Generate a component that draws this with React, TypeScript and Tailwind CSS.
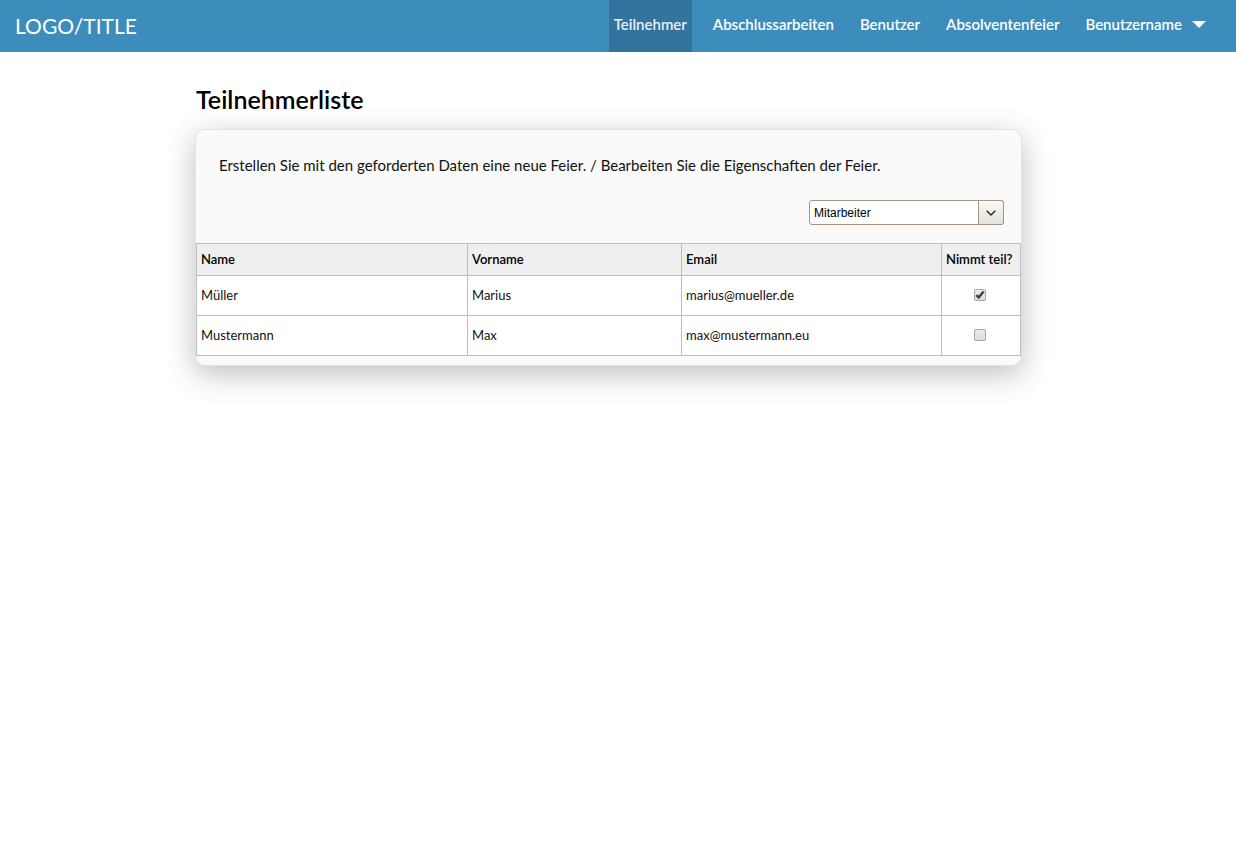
import { useState } from 'react';

type Participant = {
  name: string;
  firstName: string;
  email: string;
  attending: boolean;
};

const initialParticipants: Participant[] = [
  { name: 'Müller', firstName: 'Marius', email: 'marius@mueller.de', attending: true },
  { name: 'Mustermann', firstName: 'Max', email: 'max@mustermann.eu', attending: false },
];

const navItems = [
  { label: 'Teilnehmer', active: true },
  { label: 'Abschlussarbeiten', active: false },
  { label: 'Benutzer', active: false },
  { label: 'Absolventenfeier', active: false },
];

function Header() {
  return (
    <header className="flex h-13 items-stretch justify-between bg-[#3d8dbc] pr-[30px] pl-[15px] text-white">
      <a href="#" className="flex items-center text-[21px] leading-7">
        LOGO/TITLE
      </a>
      <nav className="flex gap-4 text-[15px] leading-5 font-semibold">
        {navItems.map((item) => (
          <a
            key={item.label}
            href="#"
            aria-current={item.active ? 'page' : undefined}
            className={
              item.active
                ? 'flex items-center bg-[#33749e] px-[5px] pb-1 text-[#e6eff5]'
                : 'flex items-center px-[5px] pb-1'
            }
          >
            {item.label}
          </a>
        ))}
        <button type="button" className="flex items-center gap-2.5 pb-1 pl-[5px]">
          Benutzername
          <svg viewBox="0 0 14 7" className="h-[7px] w-3.5" fill="currentColor" aria-hidden="true">
            <path d="M0 0h14L7 7z" />
          </svg>
        </button>
      </nav>
    </header>
  );
}

function RoleSelect() {
  return (
    <div className="relative w-[195px]">
      <select
        aria-label="Rolle"
        defaultValue="Mitarbeiter"
        className="block h-[25px] w-full appearance-none rounded-[3px] border border-[#a59684] bg-white pr-7 pl-1 font-['Liberation_Sans',sans-serif] text-[12px] text-black"
      >
        <option>Mitarbeiter</option>
        <option>Student</option>
      </select>
      <span className="pointer-events-none absolute inset-y-0 right-0 flex w-[26px] items-center justify-center rounded-r-[3px] border border-[#a59684] bg-linear-to-b from-[#fafaf7] to-[#e4e1d6]">
        <svg viewBox="0 0 10 6" className="h-1.5 w-2.5" fill="none" stroke="#222" strokeWidth="1.3" aria-hidden="true">
          <path d="M0.7 0.7L5 5l4.3-4.3" />
        </svg>
      </span>
    </div>
  );
}

function AttendanceBox({
  label,
  checked,
  onChange,
}: {
  label: string;
  checked: boolean;
  onChange: () => void;
}) {
  return (
    <span className="relative block size-3">
      <input
        type="checkbox"
        aria-label={label}
        checked={checked}
        onChange={onChange}
        className="block size-3 appearance-none rounded-[2px] border border-[#a8a8a8] bg-linear-to-b from-[#ededed] to-[#dcdcdc]"
      />
      {checked && (
        <svg viewBox="0 0 12 12" className="pointer-events-none absolute inset-0 size-3" fill="none" stroke="#3c3c3c" strokeWidth="2.4" aria-hidden="true">
          <path d="M2.4 6.2l2.3 2.2L9.6 2.6" />
        </svg>
      )}
    </span>
  );
}

export default function App() {
  const [participants, setParticipants] = useState(initialParticipants);

  const toggle = (email: string) =>
    setParticipants((list) =>
      list.map((p) => (p.email === email ? { ...p, attending: !p.attending } : p)),
    );

  return (
    <div className="min-h-screen bg-white font-['Lato',sans-serif] text-black">
      <Header />
      <main className="pt-8 pr-[214px] pl-[195px]">
        <h1 className="pl-px text-[25px] leading-[30px] font-semibold">Teilnehmerliste</h1>
        <section className="mt-[15px] rounded-[10px] border border-[#e3e3e3] bg-[#fafafa] pb-[9px] shadow-[0_8px_30px_rgba(0,0,0,0.26)]">
          <p className="px-[23px] pt-[25px] text-[15px] leading-5 text-[#111]">
            Erstellen Sie mit den geforderten Daten eine neue Feier. / Bearbeiten Sie die Eigenschaften der Feier.
          </p>
          <div className="mt-[25px] mb-[18px] flex justify-end pr-[17px]">
            <RoleSelect />
          </div>
          <table className="w-full table-fixed border-collapse text-left text-[13px] leading-5 [&_td]:border [&_td]:border-[#bdbdbd] [&_td]:px-1 [&_td]:pb-0.5 [&_th]:border [&_th]:border-[#bdbdbd] [&_th]:px-1 [&_th]:pb-0.5 [&_th]:font-semibold">
            <colgroup>
              <col className="w-[271px]" />
              <col className="w-[214px]" />
              <col />
              <col className="w-[79px]" />
            </colgroup>
            <thead>
              <tr className="h-8 bg-[#efefef]">
                <th scope="col">Name</th>
                <th scope="col">Vorname</th>
                <th scope="col">Email</th>
                <th scope="col" className="whitespace-nowrap">
                  Nimmt teil?
                </th>
              </tr>
            </thead>
            <tbody className="text-[#111]">
              {participants.map((p) => (
                <tr key={p.email} className="h-10 bg-white">
                  <td>{p.name}</td>
                  <td>{p.firstName}</td>
                  <td>{p.email}</td>
                  <td>
                    <div className="flex justify-center pr-0.5">
                      <AttendanceBox
                        label={`${p.firstName} ${p.name} nimmt teil`}
                        checked={p.attending}
                        onChange={() => toggle(p.email)}
                      />
                    </div>
                  </td>
                </tr>
              ))}
            </tbody>
          </table>
        </section>
      </main>
    </div>
  );
}
